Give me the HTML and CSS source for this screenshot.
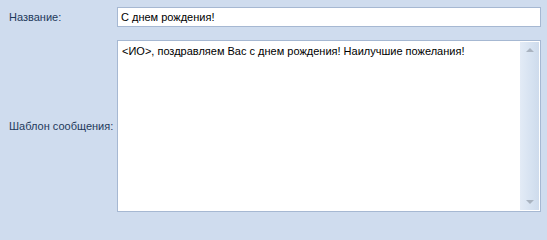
FILE: index.html
```
<!DOCTYPE html>
<html>
<head>
<meta charset="utf-8">
<link rel="stylesheet" href="styles.css">
</head>
<body>
<div class="form">
  <label class="lbl">Название:</label>
  <div class="input">С днем рождения!</div>
  <label class="lbl">Шаблон сообщения:</label>
  <div class="memo">
    <div class="memo-text">&lt;ИО&gt;, поздравляем Вас с днем рождения! Наилучшие пожелания!</div>
    <div class="vscroll">
      <div class="arrow up"></div>
      <div class="track"></div>
      <div class="arrow down"></div>
    </div>
  </div>
</div>
</body>
</html>
```
FILE: styles.css
```
html, body {
  margin: 0;
  padding: 0;
  background: #cfdcee;
  width: 547px;
  height: 217px;
  overflow: hidden;
}
.form {
  display: grid;
  grid-template-columns: 117px 424px;
  grid-template-rows: 20px 172px;
  row-gap: 13px;
  padding: 7px 6px 0 0;
  font-family: "Liberation Sans", Arial, sans-serif;
  font-size: 11px;
}
.lbl {
  color: #1e395b;
  align-self: center;
  padding-left: 9px;
}
.input {
  box-sizing: border-box;
  background: #fff;
  border: 1px solid #a6b8d2;
  color: #000;
  padding: 0 3px;
  line-height: 18px;
}
.memo {
  box-sizing: border-box;
  background: #fff;
  border: 1px solid #a6b8d2;
  display: flex;
}
.memo-text {
  flex: 1;
  padding: 3px 4px;
  color: #000;
  line-height: 14px;
}
.vscroll {
  width: 19px;
  margin: 1px 1px 1px 0;
  display: flex;
  flex-direction: column;
  background: linear-gradient(to right, #e3ebf6, #d6e2f1 60%, #cedbec);
}
.track { flex: 1; }
.arrow {
  height: 16px;
  position: relative;
}
.arrow::after {
  content: "";
  position: absolute;
  left: 6px;
  width: 0;
  height: 0;
  border-left: 4px solid transparent;
  border-right: 4px solid transparent;
}
.arrow.up::after {
  top: 6px;
  border-bottom: 4px solid #a9b3c0;
}
.arrow.down::after {
  top: 6px;
  border-top: 4px solid #a9b3c0;
}
```
